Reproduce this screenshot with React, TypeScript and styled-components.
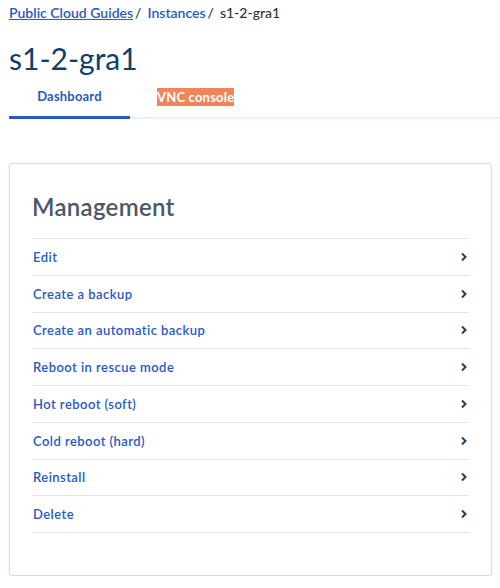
import React from "react";
import styled, { createGlobalStyle } from "styled-components";

const GlobalStyle = createGlobalStyle`
  body {
    margin: 0;
    background: #ffffff;
    font-family: "Lato", "Open Sans", sans-serif;
  }
`;

const Page = styled.div`
  padding: 2px 0 0 9px;
`;

const Breadcrumb = styled.nav`
  display: flex;
  align-items: center;
  font-size: 14px;
  font-weight: 600;
  color: #333;
  height: 20px;
`;

const Crumb = styled.a<{ $underline?: boolean }>`
  color: #2859c5;
  text-decoration: ${(p) => (p.$underline ? "underline" : "none")};
`;

const Sep = styled.span`
  margin: 0 6px 0 2px;
  color: #333;
  font-weight: 500;
`;

const Current = styled.span`
  color: #333;
  font-weight: 500;
`;

const Title = styled.h1`
  margin: 16px 0 0;
  font-size: 30px;
  font-weight: 400;
  color: #113f6d;
  line-height: 40px;
`;

const Tabs = styled.div`
  display: flex;
  margin-top: 8px;
  border-bottom: 2px solid #eaf0f7;
`;

const Tab = styled.div<{ $active?: boolean }>`
  width: ${(p) => (p.$active ? "121px" : "auto")};
  height: 28px;
  display: flex;
  justify-content: center;
  align-items: flex-start;
  padding-top: 2px;
  margin-bottom: -2px;
  border-bottom: 3px solid ${(p) => (p.$active ? "#2859c5" : "transparent")};
  font-size: 13px;
  font-weight: 700;
  letter-spacing: 0.2px;
  color: #2859c5;
`;

const Highlight = styled.span`
  margin-left: 27px;
  background: #f0855a;
  color: #ffffff;
  height: 18px;
  line-height: 18px;
`;

const Card = styled.section`
  margin: 44px 8px 0 0;
  border: 1px solid #dcdcdc;
  border-radius: 3px;
  box-shadow: 0 2px 3px rgba(0, 0, 0, 0.08);
  padding: 26px 22px 42px;
`;

const CardTitle = styled.h2`
  margin: 0 0 14px;
  font-size: 24px;
  font-weight: 600;
  letter-spacing: 0.3px;
  color: #4d5766;
  line-height: 34px;
`;

const List = styled.ul`
  list-style: none;
  margin: 0;
  padding: 0;
  border-top: 1px solid #e5e5e5;
`;

const Row = styled.li`
  display: flex;
  align-items: center;
  justify-content: space-between;
  height: 35.75px;
  border-bottom: 1px solid #e5e5e5;
  font-size: 13px;
  font-weight: 600;
  letter-spacing: 0.45px;
  color: #2859c5;
  padding-left: 1px;
  padding-right: 1px;
`;

const Chevron = () => (
  <svg width="8" height="10" viewBox="0 0 8 10">
    <path d="M2 1.5 L5.5 5 L2 8.5" fill="none" stroke="#1c3f6e" strokeWidth="2" />
  </svg>
);

const actions = [
  "Edit",
  "Create a backup",
  "Create an automatic backup",
  "Reboot in rescue mode",
  "Hot reboot (soft)",
  "Cold reboot (hard)",
  "Reinstall",
  "Delete",
];

const App = () => {
  return (
    <>
      <GlobalStyle />
      <Page>
        <Breadcrumb>
          <Crumb $underline>Public Cloud Guides</Crumb>
          <Sep>/</Sep>
          <Crumb>Instances</Crumb>
          <Sep>/</Sep>
          <Current>s1-2-gra1</Current>
        </Breadcrumb>
        <Title>s1-2-gra1</Title>
        <Tabs>
          <Tab $active>Dashboard</Tab>
          <Tab>
            <Highlight>VNC console</Highlight>
          </Tab>
        </Tabs>
        <Card>
          <CardTitle>Management</CardTitle>
          <List>
            {actions.map((a) => (
              <Row key={a}>
                {a}
                <Chevron />
              </Row>
            ))}
          </List>
        </Card>
      </Page>
    </>
  );
};

export default App;
